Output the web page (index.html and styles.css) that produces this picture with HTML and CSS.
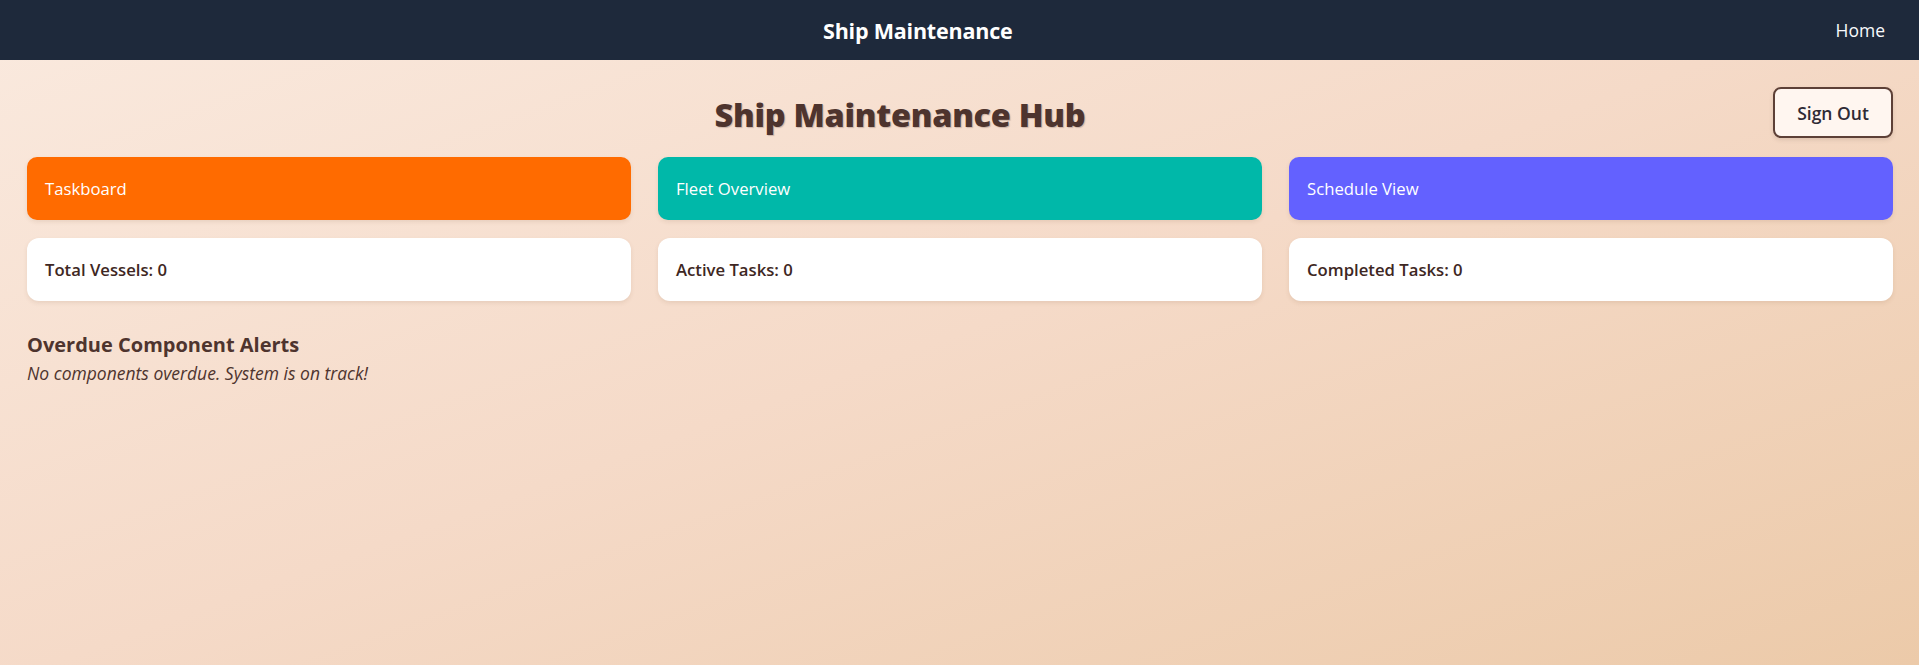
FILE: index.html
```html
<!DOCTYPE html>
<html lang="en">
<head>
<meta charset="utf-8">
<title>Ship Maintenance Hub</title>
<link rel="stylesheet" href="styles.css">
</head>
<body>
  <nav class="navbar">
    <div class="nav-title">Ship Maintenance</div>
    <a class="nav-link" href="#">Home</a>
  </nav>
  <main class="page">
    <header class="page-header">
      <h1 class="page-title">Ship Maintenance Hub</h1>
      <button class="signout">Sign Out</button>
    </header>
    <section class="card-grid">
      <a class="nav-card orange" href="#">Taskboard</a>
      <a class="nav-card teal" href="#">Fleet Overview</a>
      <a class="nav-card purple" href="#">Schedule View</a>
      <div class="stat-card">Total Vessels: 0</div>
      <div class="stat-card">Active Tasks: 0</div>
      <div class="stat-card">Completed Tasks: 0</div>
    </section>
    <section class="alerts">
      <h2 class="alerts-title">Overdue Component Alerts</h2>
      <p class="alerts-empty">No components overdue. System is on track!</p>
    </section>
  </main>
</body>
</html>
```
FILE: styles.css
```css
* { box-sizing: border-box; }
html, body { margin: 0; padding: 0; }
body {
  font-family: "Open Sans", "Noto Sans", sans-serif;
  min-height: 665px;
  background: linear-gradient(160deg, #faeadf 0%, #f5dac8 50%, #eccaa9 100%);
  color: #3e2723;
}
.navbar {
  height: 60px;
  background: #1e293b;
  display: flex;
  align-items: center;
  padding: 0 34px 0 0;
}
.nav-title {
  flex: 1;
  text-align: center;
  color: #ffffff;
  font-weight: 700;
  font-size: 21.5px;
  letter-spacing: -0.2px;
}
.nav-link {
  color: #f8fafc;
  text-decoration: none;
  font-size: 17.5px;
}
.page {
  padding: 27px 26px 27px 27px;
}
.page-header {
  display: flex;
  align-items: center;
  height: 51px;
  margin-bottom: 19px;
}
.page-title {
  flex: 1;
  margin: 4px 0 0 0;
  text-align: center;
  font-size: 32.5px;
  font-weight: 800;
  color: #4e342e;
  letter-spacing: -0.3px;
  text-shadow: 1px 1px 1px rgba(78, 52, 46, 0.25);
}
.signout {
  width: 120px;
  height: 51px;
  border: 2px solid #5d4037;
  border-radius: 8px;
  background: #fff6f0;
  color: #2f2a35;
  font-family: inherit;
  font-size: 17.5px;
  font-weight: 600;
  box-shadow: 0 2px 4px rgba(93, 64, 55, 0.15);
}
.card-grid {
  display: grid;
  grid-template-columns: repeat(3, 1fr);
  column-gap: 27px;
  row-gap: 18px;
}
.nav-card, .stat-card {
  height: 63px;
  display: flex;
  align-items: center;
  padding: 0 18px;
  border-radius: 10px;
  font-size: 16.7px;
  text-decoration: none;
  box-shadow: 0 2px 4px rgba(120, 80, 50, 0.12);
}
.nav-card { color: #ffffff; }
.orange { background: #ff6b00; }
.teal { background: #00b8a9; }
.purple { background: #6361ff; }
.stat-card {
  background: #ffffff;
  color: #3e2723;
  font-weight: 600;
  border-radius: 12px;
}
.alerts { margin-top: 30px; }
.alerts-title {
  margin: 0;
  font-size: 20px;
  font-weight: 700;
  color: #4e342e;
  line-height: 27px;
}
.alerts-empty {
  margin: 0;
  font-style: italic;
  font-size: 17.5px;
  color: #4e342e;
  line-height: 30px;
}
```
